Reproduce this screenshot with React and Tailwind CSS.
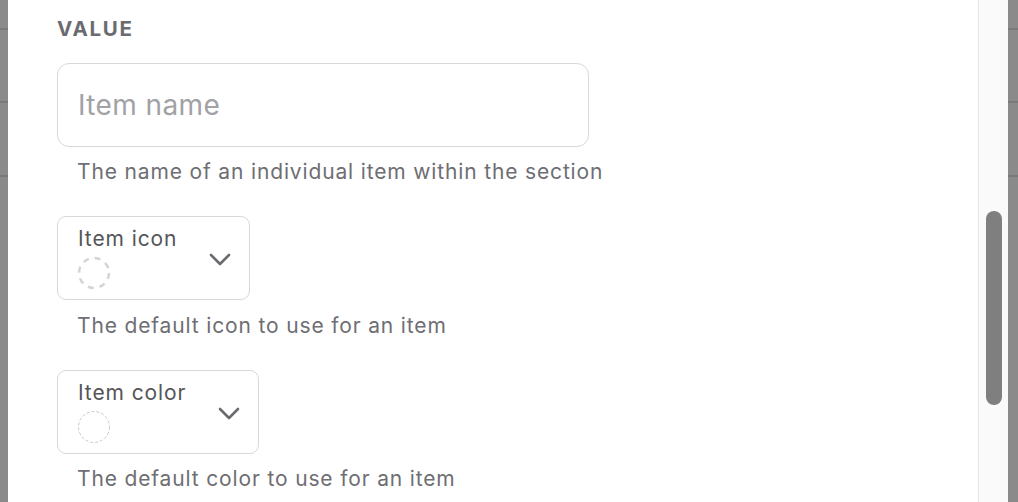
import React from 'react';

const font = { fontFamily: 'Inter, "Noto Sans", sans-serif' };

const Chevron = () => (
  <svg width="22" height="13" viewBox="0 0 22 13" className="shrink-0">
    <polyline points="2,2 11,11 20,2" fill="none" stroke="#6a6a6f" strokeWidth="2.6" strokeLinecap="round" strokeLinejoin="round" />
  </svg>
);

const IconCircle = () => (
  <svg width="34" height="34" viewBox="0 0 34 34">
    <circle cx="17" cy="17" r="15" fill="none" stroke="#d4d4d8" strokeWidth="2.5" strokeDasharray="6 5.8" />
  </svg>
);

const ColorCircle = () => (
  <svg width="34" height="34" viewBox="0 0 34 34">
    <circle cx="17" cy="17" r="15.5" fill="none" stroke="#c8c8cc" strokeWidth="1" strokeDasharray="3 2" />
  </svg>
);

const SideStrip = ({ w }) => (
  <div className={`${w} h-full bg-[#8a8a8a] flex flex-col`}>
    <div className="h-[30px] border-b-2 border-[#7a7a7a]" />
    <div className="h-[73px] border-b-2 border-[#7a7a7a]" />
    <div className="h-[74px] border-b-2 border-[#7a7a7a]" />
  </div>
);

const SelectBox = ({ label, children }) => (
  <div className="inline-flex items-center self-start border-[1.5px] border-[#d8d8db] rounded-[9px] pl-[20px] pr-[18px] h-[84px]">
    <div className="flex flex-col">
      <span className="text-[21px] leading-[24px] text-[#555558] tracking-[0.9px]">{label}</span>
      <div className="mt-[5px] -ml-[1px]">{children}</div>
    </div>
    <div className="ml-[32px] mt-[2px]">
      <Chevron />
    </div>
  </div>
);

const Helper = ({ children }) => (
  <p className="text-[21px] leading-[24px] text-[#6e6e73] pl-[20px] tracking-[0.85px]">{children}</p>
);

export default function App() {
  return (
    <div className="w-[1018px] h-[502px] flex bg-white overflow-hidden" style={font}>
      <SideStrip w="w-[8px]" />
      <div className="flex-1 pl-[49px] pt-[17px] flex flex-col">
        <h2 className="text-[20.5px] leading-[24px] font-bold text-[#6b6b70] tracking-[1.7px]">VALUE</h2>
        <div className="mt-[22px] w-[532px] h-[84px] border-[1.5px] border-[#d8d8db] rounded-[12px] flex items-center pl-[20px]">
          <span className="text-[28px] text-[#a1a1a6] tracking-[0.4px]">Item name</span>
        </div>
        <div className="mt-[13px]">
          <Helper>The name of an individual item within the section</Helper>
        </div>
        <div className="mt-[32px] flex flex-col">
          <SelectBox label="Item icon">
            <IconCircle />
          </SelectBox>
        </div>
        <div className="mt-[14px]">
          <Helper>The default icon to use for an item</Helper>
        </div>
        <div className="mt-[32px] flex flex-col">
          <SelectBox label="Item color">
            <ColorCircle />
          </SelectBox>
        </div>
        <div className="mt-[13px]">
          <Helper>The default color to use for an item</Helper>
        </div>
      </div>
      <div className="w-[30px] h-full bg-[#fafafa] border-l border-[#e6e6e6] flex flex-col pt-[211px] pl-[7px]">
        <div className="w-[16px] h-[194px] rounded-full bg-[#7f7f7f]" />
      </div>
      <SideStrip w="w-[10px]" />
    </div>
  );
}
